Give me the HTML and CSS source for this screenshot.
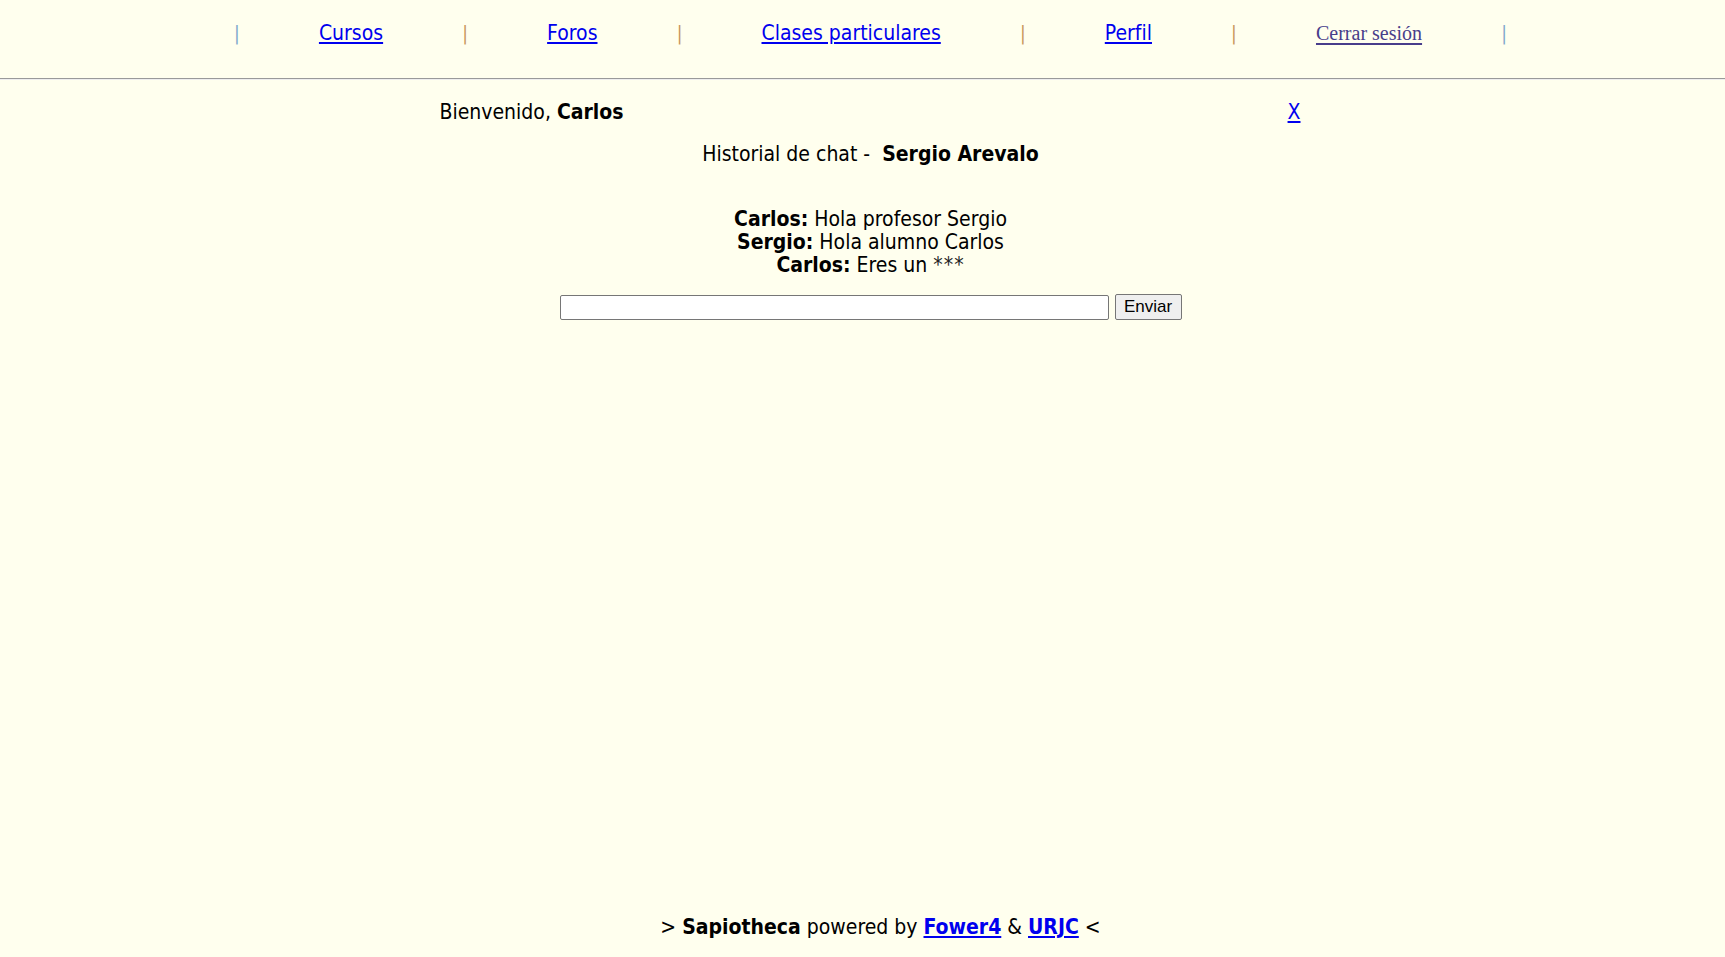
FILE: index.html
```html
<!DOCTYPE html>
<html lang="es">
<head>
<meta charset="utf-8">
<title>Sapiotheca - Chat</title>
<link rel="stylesheet" href="styles.css">
</head>
<body>
<header class="top">
  <nav class="nav">
    <span class="sep sep-first">|</span>
    <a class="nav-link" href="#">Cursos</a>
    <span class="sep">|</span>
    <a class="nav-link" href="#">Foros</a>
    <span class="sep">|</span>
    <a class="nav-link" href="#">Clases particulares</a>
    <span class="sep">|</span>
    <a class="nav-link" href="#">Perfil</a>
    <span class="sep">|</span>
    <a class="nav-link logout" href="#">Cerrar sesión</a>
    <span class="sep sep-last">|</span>
  </nav>
</header>
<hr class="rule">
<main class="page">
  <section class="panel">
    <div class="welcome">
      <span>Bienvenido, <b>Carlos</b></span>
      <a class="close" href="#">X</a>
    </div>
    <h1 class="title">Historial de chat -&nbsp; <b>Sergio Arevalo</b></h1>
    <div class="chat">
      <p class="msg"><b>Carlos:</b> Hola profesor Sergio</p>
      <p class="msg"><b>Sergio:</b> Hola alumno Carlos</p>
      <p class="msg"><b>Carlos:</b> Eres un <span class="stars">***</span></p>
    </div>
    <form class="send">
      <input class="send-input" type="text">
      <button class="send-btn" type="button">Enviar</button>
    </form>
  </section>
</main>
<footer class="footer">
  &gt; <b>Sapiotheca</b> powered by <a href="#"><b>Fower4</b></a> &amp; <a href="#"><b>URJC</b></a> &lt;
</footer>
</body>
</html>
```

FILE: styles.css
```css
html, body {
  margin: 0;
  padding: 0;
}

body {
  background: #ffffee;
  color: #000;
  font-family: "DejaVu Sans Condensed", "DejaVu Sans", Verdana, sans-serif;
  font-size: 21px;
  min-height: 100vh;
  display: flex;
  flex-direction: column;
}

a {
  color: #0000ee;
}

.top {
  height: 78px;
  padding-left: 16px;
  box-sizing: border-box;
}

.nav {
  height: 66px;
  display: flex;
  justify-content: center;
  align-items: center;
  line-height: 24px;
}

.sep {
  color: #c8965a;
  font-size: 19px;
  width: 2px;
  overflow: visible;
  display: inline-flex;
  justify-content: center;
}

.sep-first,
.sep-last {
  color: #7ea7cc;
}

.nav-link {
  padding: 0 81px;
}

.logout {
  font-family: "Liberation Serif", "Times New Roman", serif;
  font-size: 20px;
  color: #483d8b;
  text-decoration-thickness: 2px;
  text-underline-offset: 3px;
}

.rule {
  margin: 0;
  height: 0;
  border: 0;
  border-top: 1px solid #9a9a9a;
  border-bottom: 1px solid #eeeeee;
}

.page {
  padding-left: 16px;
  flex: 1;
}

.panel {
  width: 862px;
  margin: 0 auto;
}

.welcome {
  display: flex;
  justify-content: space-between;
  line-height: 24px;
  margin-top: 20px;
}

.close {
  margin-right: 1px;
}

.title {
  font-size: 21px;
  font-weight: normal;
  text-align: center;
  line-height: 24px;
  margin: 18px 0 0;
}

.chat {
  margin-top: 42px;
  text-align: center;
}

.msg {
  margin: 0;
  line-height: 23px;
  font-size: 21px;
}

.stars {
  letter-spacing: 1px;
  color: #222;
}

.send {
  display: flex;
  justify-content: center;
  gap: 6px;
  margin-top: 17px;
}

.send-input {
  width: 549px;
  height: 25px;
  box-sizing: border-box;
  border: 1px solid #767676;
  border-radius: 2px;
  background: #fff;
  margin: 1px 0 0;
  padding: 1px 2px;
}

.send-btn {
  height: 26px;
  width: 67px;
  box-sizing: border-box;
  border: 1px solid #767676;
  border-radius: 2px;
  background: #efefef;
  font-family: "Liberation Sans", Arial, sans-serif;
  font-size: 17px;
  padding: 0 6px;
  color: #000;
}

.footer {
  padding-left: 36px;
  text-align: center;
  line-height: 24px;
  padding-bottom: 18px;
}
```
